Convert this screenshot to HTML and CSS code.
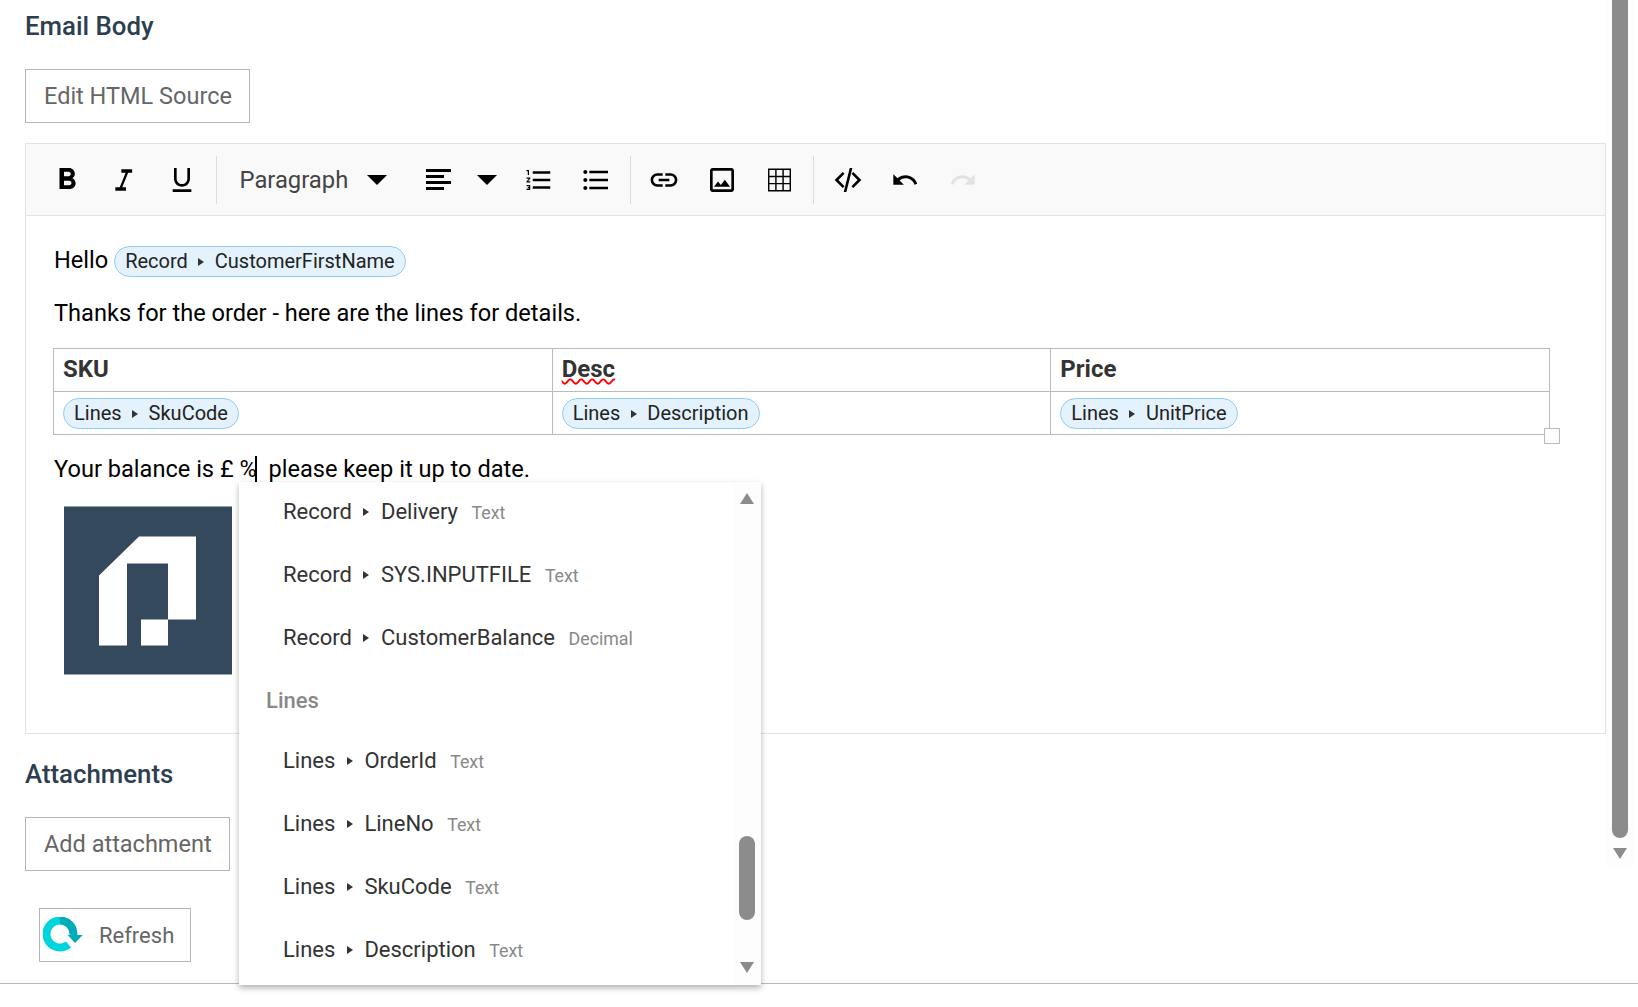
FILE: index.html
```html
<!DOCTYPE html>
<html lang="en">
<head>
    <meta charset="UTF-8">
    <meta name="viewport" content="width=device-width, initial-scale=1.0">
    <title>Email Body</title>
    <link rel="stylesheet" href="styles.css">
</head>
<body>
    <div class="page">
        <main class="main">
            <h2 class="section-title">Email Body</h2>
            <button class="btn source-btn">Edit HTML Source</button>

            <div class="editor">
                <div class="toolbar">
                    <div class="tool-group">
                        <span class="tool">
                            <svg class="icon icon-bold" viewBox="0 0 24 24"><path d="M15.6 10.79c.97-.67 1.65-1.77 1.65-2.79 0-2.26-1.75-4-4-4H7v14h7.04c2.09 0 3.71-1.7 3.71-3.79 0-1.52-.86-2.82-2.15-3.42zM10 6.5h3c.83 0 1.5.67 1.5 1.5s-.67 1.500-1.500 1.500h-3v-3zm3.500 9H10v-3h3.500c.83 0 1.500.67 1.500 1.500s-.67 1.500-1.500 1.500z"/></svg>
                        </span>
                        <span class="tool">
                            <svg class="icon" viewBox="0 0 24 24"><path d="M10 4v2.500h3.200L8.800 17.500H5.500V20h8v-2.500h-2.800l4.400-11h3V4z"/></svg>
                        </span>
                        <span class="tool">
                            <svg class="icon" viewBox="0 0 24 24"><path d="M12 17c3.310 0 6-2.690 6-6V3h-2v8c0 2.200-1.800 4-4 4s-4-1.800-4-4V3H6v8c0 3.310 2.690 6 6 6zm-7 2v2h14v-2H5z"/></svg>
                        </span>
                    </div>
                    <div class="tool-group">
                        <span class="format-select">Paragraph</span>
                        <span class="caret"></span>
                        <span class="tool align-tool">
                            <svg class="align-icon" viewBox="0 0 25 21"><path d="M0 0h25v3H0zM0 6h18v3H0zM0 12h25v3H0zM0 18h18v3H0z"/></svg>
                        </span>
                        <span class="caret align-caret"></span>
                        <span class="tool ol-tool">
                            <svg class="icon icon-list" viewBox="0 0 24 24"><path d="M2 17h2v.5H3v1h1v.5H2v1h3v-4H2v1zm1-9h1V4H2v1h1v3zm-1 3h1.800L2 13.100v.9h3v-1H3.200L5 10.900V10H2v1zm5-6v2h14V5H7zm0 14h14v-2H7v2zm0-6h14v-2H7v2z"/></svg>
                        </span>
                        <span class="tool">
                            <svg class="icon" viewBox="0 0 24 24"><path d="M4 10.500c-.830 0-1.500.670-1.500 1.500s.670 1.500 1.500 1.500 1.500-.670 1.500-1.500-.670-1.500-1.500-1.500zm0-6c-.830 0-1.500.670-1.500 1.500S3.170 7.500 4 7.500 5.500 6.830 5.500 6 4.830 4.500 4 4.500zm0 12c-.830 0-1.500.680-1.500 1.500s.680 1.500 1.500 1.500 1.500-.680 1.500-1.500-.670-1.500-1.500-1.500zM7 19h14v-2H7v2zm0-6h14v-2H7v2zm0-8v2h14V5H7z"/></svg>
                        </span>
                    </div>
                    <div class="tool-group insert-group">
                        <span class="tool">
                            <svg class="icon" viewBox="0 0 24 24"><path d="M3.900 12c0-1.710 1.390-3.100 3.100-3.100h4V7H7c-2.760 0-5 2.240-5 5s2.240 5 5 5h4v-1.900H7c-1.710 0-3.100-1.390-3.100-3.100zM8 13h8v-2H8v2zm9-6h-4v1.900h4c1.710 0 3.100 1.390 3.100 3.100s-1.390 3.100-3.100 3.100h-4V17h4c2.760 0 5-2.240 5-5s-2.240-5-5-5z"/></svg>
                        </span>
                        <span class="tool">
                            <svg class="icon" viewBox="0 0 24 24"><path d="M19 5v14H5V5h14m0-2H5c-1.100 0-2 .900-2 2v14c0 1.100.900 2 2 2h14c1.100 0 2-.900 2-2V5c0-1.100-.900-2-2-2zm-4.860 8.860l-3 3.870L9 13.140 6 17h12l-3.860-5.140z"/></svg>
                        </span>
                        <span class="tool">
                            <svg class="table-icon" viewBox="0 0 24 24"><path d="M.75.75h22.500v22.500H.75zM8.250.75v22.500M15.750.75v22.500M.75 8.250h22.500M.75 15.750h22.500" fill="none" stroke="#000" stroke-width="1.500"/></svg>
                        </span>
                    </div>
                    <div class="tool-group">
                        <span class="tool">
                            <svg class="icon" viewBox="0 0 24 24"><path d="M9.400 16.600L4.800 12l4.600-4.600L8 6l-6 6 6 6 1.400-1.400zm5.200 0l4.600-4.600-4.600-4.600L16 6l6 6-6 6-1.400-1.400zM13.300 3l-4.500 18h2L15.300 3z"/></svg>
                        </span>
                        <span class="tool">
                            <svg class="icon icon-history" viewBox="0 0 24 24"><path d="M12.500 8c-2.650 0-5.050.990-6.900 2.600L2 7v9h9l-3.620-3.620c1.390-1.160 3.160-1.880 5.120-1.880 3.540 0 6.550 2.310 7.600 5.500l2.370-.780C21.080 11.030 17.150 8 12.500 8z"/></svg>
                        </span>
                        <span class="tool disabled">
                            <svg class="icon icon-history" viewBox="0 0 24 24"><path d="M18.400 10.600C16.550 8.990 14.150 8 11.500 8c-4.650 0-8.580 3.030-9.970 7.220L3.900 16c1.050-3.190 4.050-5.500 7.600-5.500 1.950 0 3.730.720 5.120 1.880L13 16h9V7l-3.600 3.600z"/></svg>
                        </span>
                    </div>
                </div>

                <div class="content">
                    <p class="hello">Hello <span class="chip">Record<i class="arrow"></i>CustomerFirstName</span></p>
                    <p class="thanks">Thanks for the order - here are the lines for details.</p>

                    <div class="table-wrap">
                        <table class="lines-table">
                            <tr>
                                <th>SKU</th>
                                <th><span class="misspelt">Desc</span></th>
                                <th>Price</th>
                            </tr>
                            <tr>
                                <td><span class="chip">Lines<i class="arrow"></i>SkuCode</span></td>
                                <td><span class="chip">Lines<i class="arrow"></i>Description</span></td>
                                <td><span class="chip">Lines<i class="arrow"></i>UnitPrice</span></td>
                            </tr>
                        </table>
                        <span class="resize-handle"></span>
                    </div>

                    <p class="balance">Your balance is £ %<span class="text-cursor"></span>&nbsp; please keep it up to date.</p>

                    <svg class="logo" viewBox="0 0 168 168">
                        <rect width="168" height="168" fill="#35495d"/>
                        <path d="M35 69 75 30h57v83h-28V57H63v82H35z" fill="#fff"/>
                        <rect x="77" y="113" width="27" height="26" fill="#fff"/>
                    </svg>
                </div>
            </div>

            <h2 class="section-title attachments-title">Attachments</h2>
            <button class="btn">Add attachment</button>

            <div class="refresh-row">
                <button class="btn refresh-btn">
                    <svg class="refresh-icon" viewBox="0 0 40 36">
                        <path d="M25.500 27.500A13.500 13.500 0 1 1 17 3.500" fill="none" stroke="#00d4dc" stroke-width="8"/>
                        <path d="M17 3.500A13.500 13.500 0 0 1 30.400 18" fill="none" stroke="#00acb8" stroke-width="8"/>
                        <path d="M24.700 18h15L32 26z" fill="#00acb8"/>
                    </svg>
                    Refresh
                </button>
            </div>
        </main>

        <div class="page-scroll">
            <span class="thumb"></span>
            <span class="arrow-down"></span>
        </div>

        <div class="dropdown">
            <div class="dropdown-list">
                <div class="item">Record<i class="arrow"></i>Delivery<span class="type">Text</span></div>
                <div class="item">Record<i class="arrow"></i>SYS.INPUTFILE<span class="type">Text</span></div>
                <div class="item">Record<i class="arrow"></i>CustomerBalance<span class="type">Decimal</span></div>
                <div class="group-title">Lines</div>
                <div class="item">Lines<i class="arrow"></i>OrderId<span class="type">Text</span></div>
                <div class="item">Lines<i class="arrow"></i>LineNo<span class="type">Text</span></div>
                <div class="item">Lines<i class="arrow"></i>SkuCode<span class="type">Text</span></div>
                <div class="item">Lines<i class="arrow"></i>Description<span class="type">Text</span></div>
            </div>
            <div class="dropdown-scroll">
                <span class="arrow-up"></span>
                <span class="thumb"></span>
                <span class="arrow-down"></span>
            </div>
        </div>
    </div>
</body>
</html>
```

FILE: styles.css
```css
* {
    margin: 0;
    padding: 0;
    box-sizing: border-box;
}

body {
    font-family: Roboto, 'Liberation Sans', sans-serif;
    background: white;
    color: #000;
    height: 1007px;
    overflow: hidden;
}

.page {
    position: relative;
    display: flex;
    align-items: flex-start;
    height: 984px;
    border-bottom: 1px solid #bbb;
}

.main {
    width: 1606px;
    padding: 8px 0 0 25px;
}

.section-title {
    font-size: 25.8px;
    font-weight: 500;
    line-height: 36px;
    color: #2c3e50;
}

.btn {
    display: block;
    height: 54px;
    padding: 0 17px 0 18px;
    background: white;
    border: 1px solid #b5b5b5;
    font-family: inherit;
    font-size: 23.5px;
    color: #666;
}

.source-btn {
    margin-top: 25px;
}

.editor {
    margin-top: 20px;
    height: 591px;
    border: 1px solid #e3e3e3;
}

.toolbar {
    display: flex;
    align-items: center;
    height: 72px;
    background: #f9f9f9;
    border-bottom: 1px solid #e3e3e3;
    padding-left: 12px;
}

.tool-group {
    display: flex;
    align-items: center;
    height: 48px;
    padding: 0 5px 0 4.5px;
    border-right: 1px solid #ddd;
}

.tool-group:first-child {
    padding-left: 0;
}

.tool-group:last-child {
    border-right: none;
}

.insert-group {
    padding: 0 5.5px 0 4.5px;
}

.tool {
    display: flex;
    align-items: center;
    justify-content: center;
    width: 57.5px;
    height: 48px;
}

.icon {
    width: 32px;
    height: 32px;
    fill: #000;
}

.icon-bold {
    width: 36px;
    height: 36px;
}

.icon-list {
    width: 30px;
    height: 30px;
}

.icon-history {
    width: 28px;
    height: 28px;
}

.align-icon {
    width: 25px;
    height: 21px;
    fill: #000;
}

.table-icon {
    width: 23px;
    height: 24px;
}

.disabled .icon {
    fill: #e2e2e2;
}

.format-select {
    padding-left: 18.5px;
    font-size: 23.8px;
    color: #444;
}

.caret {
    width: 0;
    height: 0;
    margin-left: 19px;
    border-left: 10px solid transparent;
    border-right: 10px solid transparent;
    border-top: 10px solid #000;
}

.align-tool {
    margin-left: 22px;
}

.align-caret {
    margin-left: 10px;
}

.ol-tool {
    margin-left: 13px;
}

.content {
    padding: 27px 26px 0 28px;
    font-size: 23.6px;
}

.hello {
    line-height: 34px;
}

.thanks {
    margin-top: 19px;
    line-height: 34px;
}

.chip {
    display: inline-block;
    height: 31px;
    padding: 0 10px;
    border: 1px solid #90caf9;
    border-radius: 16px;
    background: #e3f2fd;
    font-size: 20px;
    font-weight: 400;
    line-height: 28px;
    color: #222;
    vertical-align: middle;
}

.arrow {
    display: inline-block;
    margin: 0 10.5px;
    border-left: 6px solid #333;
    border-top: 4px solid transparent;
    border-bottom: 4px solid transparent;
    vertical-align: 2px;
}

.table-wrap {
    position: relative;
    margin: 18px 0 0 -1px;
    width: 1497px;
}

.lines-table {
    width: 100%;
    table-layout: fixed;
    border-collapse: collapse;
    font-size: 24px;
    color: #333;
}

.lines-table th,
.lines-table td {
    height: 43px;
    padding: 0 9px;
    border: 1px solid #bbb;
    text-align: left;
}

.lines-table th {
    padding-bottom: 2px;
    font-weight: 700;
}

.misspelt {
    text-decoration: underline wavy #f00 1.5px;
}

.resize-handle {
    position: absolute;
    right: -10px;
    bottom: -9px;
    width: 16px;
    height: 16px;
    background: white;
    border: 1px solid #bbb;
}

.balance {
    margin-top: 17px;
    line-height: 34px;
}

.text-cursor {
    display: inline-block;
    width: 2px;
    height: 27px;
    margin-left: -2px;
    background: #000;
    vertical-align: -6px;
}

.logo {
    display: block;
    width: 168px;
    height: 169px;
    margin: 20px 0 0 10px;
}

.attachments-title {
    margin-top: 22px;
}

.attachments-title + .btn {
    margin-top: 25px;
}

.refresh-row {
    padding: 37px 0 0 14px;
}

.refresh-btn {
    display: flex;
    align-items: center;
    gap: 16px;
    padding: 0 16px 0 3px;
    font-size: 22px;
}

.refresh-icon {
    width: 40px;
    height: 36px;
}

.page-scroll {
    display: flex;
    flex-direction: column;
    align-items: center;
    width: 28px;
    height: 870px;
    background: #fdfdfd;
}

.thumb {
    display: block;
    width: 16px;
    background: #8c8c8c;
    border-radius: 8px;
}

.page-scroll .thumb {
    height: 838px;
    border-radius: 0 0 8px 8px;
}

.page-scroll .arrow-down {
    margin-top: 10px;
}

.arrow-up,
.arrow-down {
    width: 0;
    height: 0;
    border-left: 7px solid transparent;
    border-right: 7px solid transparent;
}

.arrow-up {
    border-bottom: 11px solid #8c8c8c;
}

.arrow-down {
    border-top: 11px solid #8c8c8c;
}

/* autocomplete popup */
.dropdown {
    position: absolute;
    left: 239px;
    top: 482px;
    display: flex;
    width: 522px;
    height: 503px;
    background: white;
    box-shadow: 0 3px 6px rgba(0, 0, 0, 0.3);
    overflow: hidden;
}

.dropdown-list {
    flex: 1;
    margin-top: -2px;
    font-size: 22px;
    color: #333;
}

.item {
    display: flex;
    align-items: center;
    height: 63px;
    padding-left: 44px;
}

.item .arrow {
    margin: 0 11.5px;
}

.type {
    margin-left: 13.5px;
    padding-top: 2px;
    font-size: 17.8px;
    color: #888;
}

.group-title {
    display: flex;
    align-items: center;
    height: 60px;
    padding: 3px 0 0 27px;
    font-weight: 500;
    font-size: 22px;
    color: #888;
}

.dropdown-scroll {
    display: flex;
    flex-direction: column;
    align-items: center;
    width: 28px;
    padding: 11px 0;
    background: #fdfdfd;
}

.dropdown-scroll .thumb {
    height: 84px;
    margin-top: 332px;
}

.dropdown-scroll .arrow-down {
    margin-top: 42px;
}
```
